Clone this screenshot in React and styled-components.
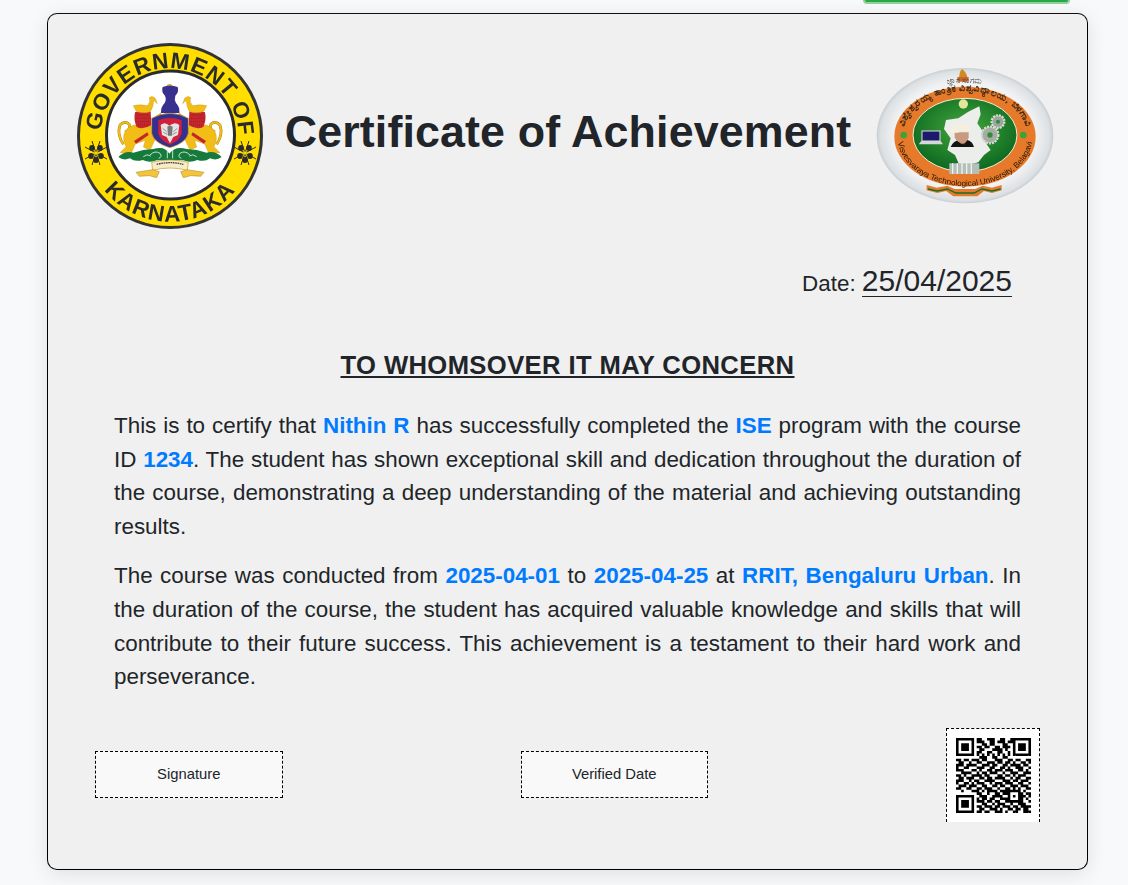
import React from 'react'
import styled, { createGlobalStyle } from 'styled-components'

const QR_ROWS = [
  '00000000110011100110010000000',
  '00000000111001101110110000000',
  '00000000001101100011000000000',
  '00000000110110011011100000000',
  '00000000011000111101000000000',
  '00000000110011001100100000000',
  '00000000101010101010100000000',
  '00000000011100110011000000000',
  '11011011101100011100110110011',
  '01100100110011101101101001101',
  '11101111001110110011011110110',
  '10011000111001100110100111001',
  '11100011010011011101110011010',
  '00111100101101110010011100111',
  '11010011110110001101101011100',
  '01101110011011011110010110011',
  '11100101100111100011101101110',
  '10011010111001011101110011001',
  '01110111001100110110011101110',
  '11001100110111001001101010011',
  '00100011101011110111111110100',
  '00000000110010011011100011011',
  '00000000011100111100101011101',
  '00000000101101100111100011010',
  '00000000111011011001111111001',
  '00000000001100101110010011100',
  '00000000110111011011101101111',
  '00000000011001110100110110110',
  '00000000110110011101001100111',
]

// finder squares and the small alignment square sit on top of the data rows
function isQrDark(x, y) {
  const size = QR_ROWS.length
  const corners = [[0, 0], [size - 7, 0], [0, size - 7]]
  for (const [cx, cy] of corners) {
    const dx = x - cx
    const dy = y - cy
    if (dx >= 0 && dx < 7 && dy >= 0 && dy < 7) {
      const edge = dx === 0 || dx === 6 || dy === 0 || dy === 6
      const core = dx >= 2 && dx <= 4 && dy >= 2 && dy <= 4
      return edge || core
    }
  }
  const ax = Math.abs(x - 22)
  const ay = Math.abs(y - 22)
  if (ax <= 2 && ay <= 2) return Math.max(ax, ay) !== 1
  return QR_ROWS[y][x] === '1'
}

const GlobalStyle = createGlobalStyle`
  html, body {
    margin: 0;
    background: #f8f9fa;
    font-family: "Liberation Sans", Arial, sans-serif;
    color: #212529;
  }
`

export default function App() {
  return (
    <Page>
      <GlobalStyle />
      <ButtonStrip>
        <DownloadButton aria-label="Download certificate" />
      </ButtonStrip>
      <Certificate>
        <Header>
          <KarnatakaLogo />
          <Title>Certificate of Achievement</Title>
          <VtuLogo />
        </Header>
        <DateRow>
          Date: <DateValue>25/04/2025</DateValue>
        </DateRow>
        <Heading>TO WHOMSOVER IT MAY CONCERN</Heading>
        <Body>
          <Paragraph>
            This is to certify that <Mark>Nithin R</Mark> has successfully completed the <Mark>ISE</Mark> program
            with the course ID <Mark>1234</Mark>. The student has shown exceptional skill and dedication throughout
            the duration of the course, demonstrating a deep understanding of the material and achieving
            outstanding results.
          </Paragraph>
          <Paragraph>
            The course was conducted from <Mark>2025-04-01</Mark> to <Mark>2025-04-25</Mark> at{' '}
            <Mark>RRIT, Bengaluru Urban</Mark>. In the duration of the course, the student has acquired valuable
            knowledge and skills that will contribute to their future success. This achievement is a testament to
            their hard work and perseverance.
          </Paragraph>
        </Body>
        <Footer>
          <StampBox>Signature</StampBox>
          <StampBox>Verified Date</StampBox>
          <QrBox>
            <QrCode />
          </QrBox>
        </Footer>
      </Certificate>
    </Page>
  )
}

function Flower({ x, y }) {
  return (
    <g transform={`translate(${x} ${y})`}>
      <path d="M-11 -6L11 6M11 -6L-11 6M-4 -12L4 12M4 -12L-4 12" stroke="#2b2b2b" strokeWidth="1" />
      {[[-4, -5], [4, -5], [5, 3], [-5, 3], [0, 7]].map(([cx, cy]) => (
        <ellipse key={`${cx}${cy}`} cx={cx} cy={cy} rx="2.8" ry="3" fill="#2b2b2b" />
      ))}
      <circle r="1.8" fill="#ffde00" />
    </g>
  )
}

function Lion() {
  return (
    <g>
      <path d="M40 208Q20 178 30 150Q45 135 58 148Q62 165 45 170" fill="none" stroke="#a8800f" strokeWidth="8" />
      <path d="M40 208Q20 178 30 150Q45 135 58 148Q62 165 45 170" fill="none" stroke="#f2bd16" strokeWidth="5.5" />
      <path d="M72 150L122 150L137 190L120 226L100 216L106 196L76 207L64 234L30 233L48 215Q35 190 45 170Q55 155 72 150Z" fill="#f2bd16" stroke="#b58c10" strokeWidth="1" />
      <path d="M72 198L112 172L116 180L78 206Z" fill="#c5262d" />
      <path d="M75 112Q100 102 122 110L124 150Q100 166 80 156Q70 135 75 112Z" fill="#c5262d" />
      <path d="M80 120H118M78 130H120M78 140H120M84 150H116" stroke="#8e1a20" strokeWidth="2" strokeDasharray="3 3" />
      <path d="M70 92Q90 87 112 92Q123 80 118 68Q126 60 136 70L142 86L131 76Q131 96 121 110Q96 118 78 108Z" fill="#f2bd16" stroke="#b58c10" strokeWidth="1" />
      <path d="M137 124Q150 116 152 112L156 122L138 134Z" fill="#e0a81c" />
    </g>
  )
}

function KarnatakaLogo() {
  return (
    <BlurredSvg $blur={0.3} width="190" height="190" viewBox="0 0 190 190">
      <defs>
        <path id="arcTop" d="M 26 110 A 69 69 0 1 1 160 115" />
        <path id="arcBottom" d="M 11 112 A 84.5 84.5 0 0 0 177 112" />
      </defs>
      <circle cx="94" cy="95" r="91.5" fill="#ffde00" stroke="#333" strokeWidth="3" />
      <circle cx="94.5" cy="94" r="64" fill="#fff" stroke="#2b2b2b" strokeWidth="3" />
      <text fontFamily="Liberation Sans" fontWeight="700" fontSize="22.5" fill="#2b2b2b" letterSpacing="0.8">
        <textPath href="#arcTop" startOffset="50%" textAnchor="middle">GOVERNMENT OF</textPath>
      </text>
      <text fontFamily="Liberation Sans" fontWeight="700" fontSize="22.5" fill="#2b2b2b" letterSpacing="1.2">
        <textPath href="#arcBottom" startOffset="50%" textAnchor="middle">KARNATAKA</textPath>
      </text>
      <Flower x={20} y={112} />
      <Flower x={169} y={112} />

      {/* emblem, traced in the 3x crop's coordinates */}
      <g transform="translate(34 34) scale(0.3333)">
        <Lion />
        <g transform="matrix(-1 0 0 1 360 0)">
          <Lion />
        </g>
        <path d="M168 34Q178 20 190 34L186 38H172Z" fill="#c9a13a" />
        <path d="M158 36Q180 28 203 36Q208 50 196 62Q192 74 198 84Q210 96 208 114H153Q152 96 164 84Q170 74 165 62Q153 50 158 36Z" fill="#37308f" />
        <path d="M125 130Q180 100 235 130V175Q228 205 180 218Q132 205 125 175Z" fill="#34308f" stroke="#e0a81c" strokeWidth="2" />
        <path d="M145 136Q180 122 215 136V175Q210 197 180 209Q150 197 145 175Z" fill="#d3203a" />
        <path d="M152 150Q165 138 178 152Q194 138 208 150L204 180L190 186L180 205L170 186L156 180Z" fill="#e4e4e4" />
        <path d="M172 155Q180 150 188 155L186 182H174Z" fill="#777" />
        <path d="M158 160L170 170M202 160L190 170M160 172L172 178M200 172L188 178" stroke="#666" strokeWidth="2" />
        <path d="M25 246Q45 226 70 233Q100 222 130 222Q165 212 178 236Q195 212 230 222Q260 222 290 233Q315 226 335 246Q320 258 300 250Q285 262 262 255Q240 265 220 256H140Q120 265 98 255Q75 262 60 250Q40 258 25 246Z" fill="#157a3c" />
        <path d="M120 240Q135 225 150 235Q158 246 146 250M240 240Q225 225 210 235Q202 246 214 250M100 245Q112 235 122 243M260 245Q248 235 238 243M172 222V250M188 222V250" stroke="#e6f5ea" strokeWidth="2.5" fill="none" />
        <path d="M125 262Q180 248 235 262L232 286Q180 272 128 286Z" fill="#f6ecc8" stroke="#c69a20" strokeWidth="2" />
        <path d="M140 268Q180 258 220 268" stroke="#3c3c3c" strokeWidth="4" strokeDasharray="5 2" fill="none" />
        <path d="M78 292L128 284L148 290L140 308L118 302L88 304Z" fill="#f2c53d" stroke="#a8800f" strokeWidth="1.5" />
        <path d="M282 292L232 284L212 290L220 308L242 302L272 304Z" fill="#f2c53d" stroke="#a8800f" strokeWidth="1.5" />
      </g>
    </BlurredSvg>
  )
}

function VtuLogo() {
  return (
    <BlurredSvg $blur={0.55} width="180" height="138" viewBox="0 0 180 138">
      <defs>
        <radialGradient id="silver" cx="50%" cy="50%" r="52%">
          <stop offset="76%" stopColor="#f1f2f3" />
          <stop offset="92%" stopColor="#dde1e4" />
          <stop offset="100%" stopColor="#b4bcc1" />
        </radialGradient>
        <radialGradient id="field" cx="50%" cy="42%" r="60%">
          <stop offset="0%" stopColor="#45a83c" />
          <stop offset="100%" stopColor="#0a6620" />
        </radialGradient>
        <path id="vtuTop" d="M 130 238 A 185 130 0 0 1 500 238" />
        <path id="vtuBottom" d="M 112 245 A 203 148 0 0 0 518 245" />
        <path id="vtuMotto" d="M 225 92 Q 312 76 400 92" />
      </defs>
      {/* traced in the 3x crop's coordinates */}
      <g transform="translate(-15 -12) scale(0.3333)">
        <ellipse cx="315" cy="242" rx="265" ry="203" fill="url(#silver)" />
        <ellipse cx="315" cy="245" rx="212" ry="150" fill="#e67a2a" />
        <ellipse cx="315" cy="240" rx="156" ry="110" fill="url(#field)" stroke="#f7ecd0" strokeWidth="3" />
        <path d="M306 42Q318 50 322 66H298Q298 50 306 42Z" fill="#d18a1f" />
        <rect x="292" y="66" width="34" height="14" fill="#c9672a" />
        <text fontFamily="Noto Sans, Liberation Sans, sans-serif" fontSize="24" fill="#444">
          <textPath href="#vtuMotto" startOffset="50%" textAnchor="middle">ಜ್ಞಾನ ಸಂಗಮ</textPath>
        </text>
        <text fontFamily="Noto Sans, Liberation Sans, sans-serif" fontSize="28" fontWeight="700" fill="#3f2a14" letterSpacing="1.5">
          <textPath href="#vtuTop" startOffset="50%" textAnchor="middle">ವಿಶ್ವೇಶ್ವರಯ್ಯ ತಾಂತ್ರಿಕ ವಿಶ್ವವಿದ್ಯಾಲಯ, ಬೆಳಗಾವಿ</textPath>
        </text>
        <text fontFamily="Liberation Sans" fontSize="24.5" fill="#241505">
          <textPath href="#vtuBottom" startOffset="50%" textAnchor="middle">Visvesvaraya Technological University, Belagavi</textPath>
        </text>
        <circle cx="310" cy="147" r="14" fill="#f8f1a8" opacity=".9" />
        <path d="M258 195L295 190L325 170L358 154L362 178L352 205L372 235L378 265L392 285L372 300L355 322L325 330H298L285 300L262 285L272 250L252 222Z" fill="#eceeec" />
        <circle cx="414" cy="200" r="19" fill="#9ca59c" stroke="#d7dcd5" strokeWidth="7" strokeDasharray="6 3" />
        <circle cx="390" cy="240" r="25" fill="#a4aca4" stroke="#d7dcd5" strokeWidth="7" strokeDasharray="6 3" />
        <circle cx="414" cy="200" r="6" fill="#2f8d38" />
        <circle cx="390" cy="240" r="8" fill="#2f8d38" />
        <rect x="186" y="228" width="54" height="30" fill="#1b1b6e" stroke="#dedede" strokeWidth="3" />
        <path d="M184 258H242L249 268H176Z" fill="#d7d7d7" />
        <path d="M272 276Q280 256 300 254H320Q338 258 342 276Z" fill="#141414" />
        <path d="M304 256L312 270L318 256Z" fill="#b3261e" />
        <path d="M284 232H326V248Q318 268 304 266Q290 260 284 248Z" fill="#c99a80" />
        <path d="M270 222Q282 202 310 204Q334 210 336 230Q320 224 302 230Q284 236 272 232Z" fill="#f4efdf" />
        <rect x="268" y="325" width="90" height="32" fill="#b5bfb9" />
        <path d="M278 325V357M292 325V357M306 325V357M320 325V357M334 325V357" stroke="#eef1ef" strokeWidth="4" />
        <path d="M200 390L230 398L262 392L284 402H346L368 392L396 398L425 390V406L396 414L372 408L352 424H280L258 408L232 414L200 406Z" fill="#e67a2a" />
        <path d="M204 402L232 408L262 402L288 414H342L366 402L396 408L422 402" stroke="#14702b" strokeWidth="4" fill="none" />
        <circle cx="131" cy="240" r="10" fill="#3aa33a" />
        <circle cx="490" cy="240" r="10" fill="#3aa33a" />
      </g>
    </BlurredSvg>
  )
}

function QrCode() {
  const size = QR_ROWS.length
  let d = ''
  for (let y = 0; y < size; y++) {
    for (let x = 0; x < size; x++) {
      if (isQrDark(x, y)) d += `M${x} ${y}h1v1h-1z`
    }
  }
  return (
    <svg width="75" height="75" viewBox={`0 0 ${size} ${size}`}>
      <path d={d} fill="#000" />
    </svg>
  )
}

const Page = styled.div`
  height: 885px;
  overflow: hidden;
  box-sizing: border-box;
  padding: 0 40px 0 47px;
`

const ButtonStrip = styled.div`
  height: 13px;
  display: flex;
  justify-content: flex-end;
  align-items: flex-start;
  padding-right: 20px;
`

const DownloadButton = styled.div`
  width: 203px;
  height: 1.5px;
  background: #28a745;
  border-radius: 0 0 4px 4px;
  box-shadow: 0 0 0 2px rgba(40, 167, 69, 0.5);
`

const Certificate = styled.div`
  box-sizing: border-box;
  width: 1041px;
  height: 857px;
  background: #f0f0f0;
  border: 1px solid #000;
  border-top-color: #111;
  border-radius: 10px;
  box-shadow: 0 4px 20px rgba(0, 0, 0, 0.1);
  padding: 27px 28px 0;
`

const Header = styled.div`
  display: flex;
  align-items: center;
  justify-content: space-between;
  height: 190px;
  padding-right: 4px;
`

const BlurredSvg = styled.svg`
  flex: none;
  display: block;
  filter: blur(${(p) => p.$blur}px);
`

const Title = styled.h1`
  margin: 0 5px 8px 0;
  font-size: 44.8px;
  line-height: 1.2;
  font-weight: 700;
  letter-spacing: 0.12px;
`

const DateRow = styled.div`
  margin-top: 34px;
  padding-right: 47px;
  text-align: right;
  font-size: 22.4px;
  line-height: 35px;
`

const DateValue = styled.span`
  display: inline-block;
  font-size: 30px;
  line-height: 31px;
  border-bottom: 1px solid #212529;
`

const Heading = styled.h2`
  margin: 49px 0 0;
  text-align: center;
  font-size: 25.6px;
  line-height: 31px;
  font-weight: 700;
  letter-spacing: 0.4px;
  text-decoration: underline;
`

const Body = styled.div`
  margin-top: 28px;
  padding: 0 38px;
`

const Paragraph = styled.p`
  margin: 0 0 16px;
  font-size: 22.4px;
  line-height: 33.6px;
  text-align: justify;
`

const Mark = styled.strong`
  color: #007bff;
  font-weight: 700;
`

const Footer = styled.div`
  display: flex;
  align-items: flex-end;
  justify-content: space-between;
  margin-top: 34px;
  padding: 0 19px;
  height: 94px;
`

const StampBox = styled.div`
  box-sizing: border-box;
  width: 187.5px;
  height: 47px;
  margin-bottom: 24px;
  display: flex;
  align-items: center;
  justify-content: center;
  background: #f9f9f9;
  border: 1px dashed #000;
  font-size: 14.8px;
`

const QrBox = styled.div`
  box-sizing: border-box;
  width: 94px;
  height: 94px;
  display: flex;
  align-items: flex-start;
  justify-content: center;
  padding-top: 9px;
  background: #fff;
  border: 1px dashed #000;
  border-bottom: none;
`
